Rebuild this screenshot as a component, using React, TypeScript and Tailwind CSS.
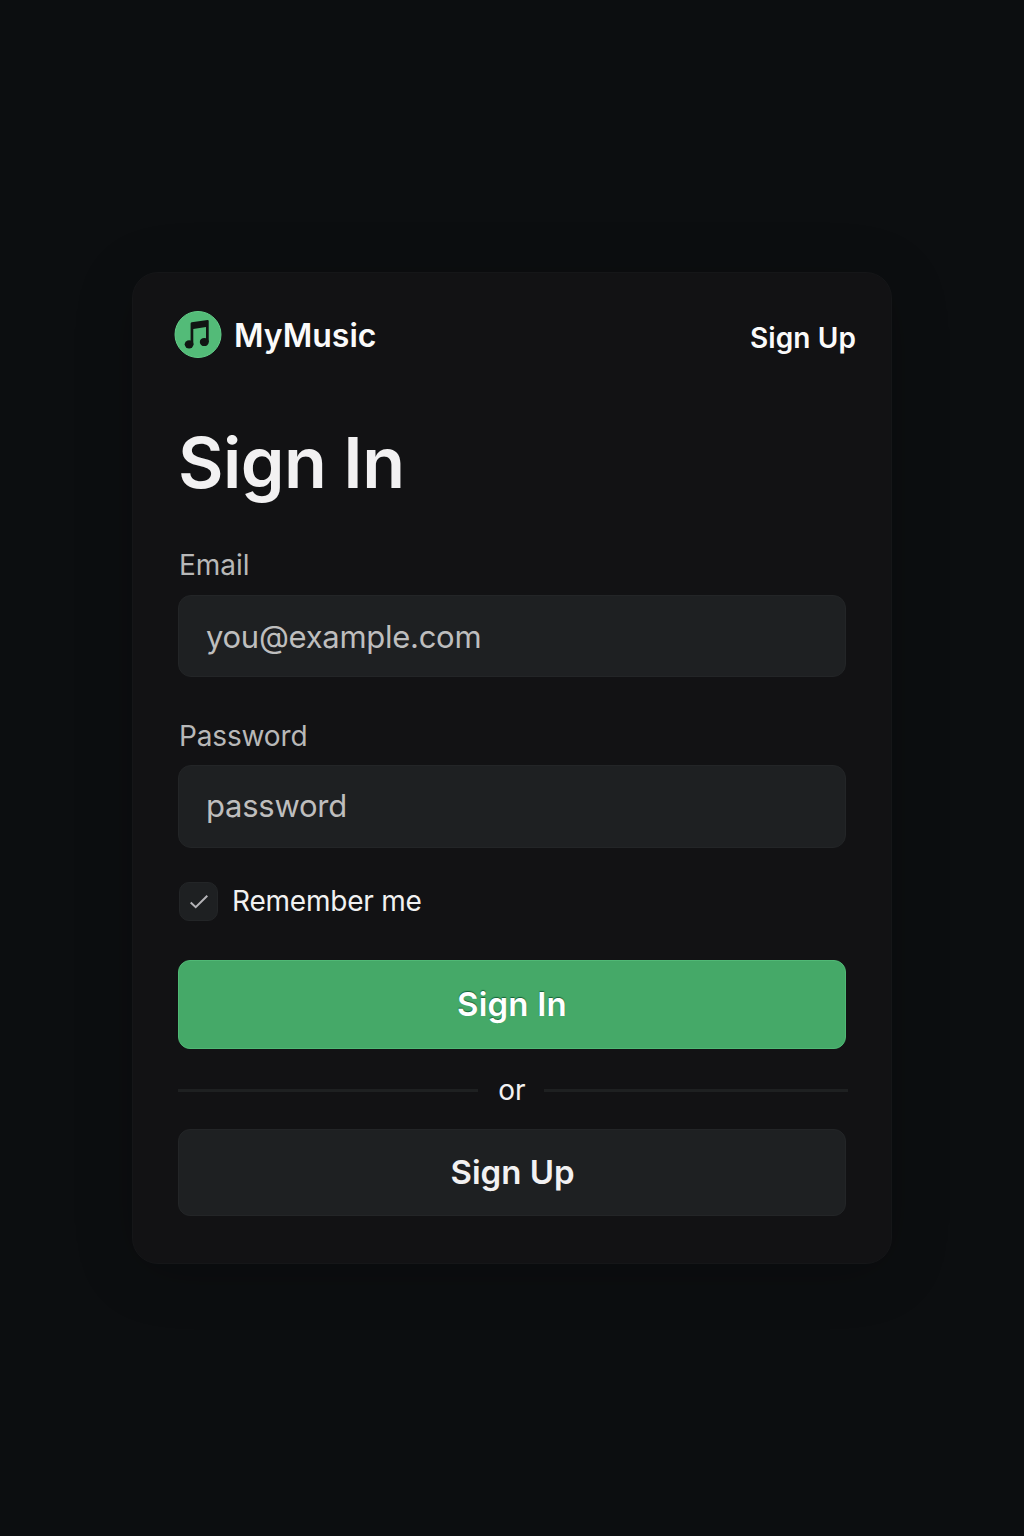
import React from "react";

const field = "flex w-[668px] items-center rounded-[13px] border border-[#232527] bg-[#1e2022] px-[26px] text-[#bebebe]";

function Label({ children, className = "" }: { children: React.ReactNode; className?: string }) {
  return <span className={`whitespace-nowrap ${className}`}>{children}</span>;
}

export default function App() {
  return (
    <div className="h-[1536px] w-[1024px] overflow-hidden bg-[#0c0e10] pt-[272px] font-['Inter',sans-serif]">
      <main className="ml-[132px] h-[992px] w-[760px] rounded-[26px] border border-[#151618] bg-[#121214] pl-[45px] shadow-[0_8px_60px_rgba(0,0,0,0.2)]">
        <header className="-ml-[4px] flex h-[124px] w-[682px] items-center justify-between text-[#fafafa]">
          <div className="flex items-center">
            <svg width="48" height="48" viewBox="0 0 48 48">
              <circle cx="24" cy="23.5" r="23" fill="#53bb78" stroke="#63ce89" />
              <g fill="#111513">
                <path d="M16.6 12.4Q16.7 11.5 17.6 11.3L33.6 8.9Q34.7 8.8 34.7 9.9V31H32V16L19.3 18V33.5H16.6Z" />
                <ellipse cx="15.1" cy="33.3" rx="4.4" ry="4.1" />
                <ellipse cx="30.3" cy="31" rx="4.5" ry="4.1" />
              </g>
            </svg>
            <Label className="ml-[12px] pt-[2px] text-[32px] font-semibold">MyMusic</Label>
          </div>
          <Label className="pt-[6px] text-[28px] font-semibold tracking-[0.1px]">Sign Up</Label>
        </header>
        <h1 className="mt-[21px] h-[100px] text-[70px] leading-[90px] font-semibold tracking-[-0.55px] text-[#f2f1f2]"><Label>Sign In</Label></h1>
        <div className="mt-[26px] h-[51px] pl-[1px] text-[28px] text-[#b8b8b8]"><Label>Email</Label></div>
        <div className={`${field} h-[82px]`}><Label className="pl-[1px] pt-[2px] text-[31px] tracking-[-0.28px]">you@example.com</Label></div>
        <div className="mt-[38px] h-[50px] pl-[1px] text-[28px] tracking-[-0.15px] text-[#b8b8b8]"><Label>Password</Label></div>
        <div className={`${field} h-[83px]`}><Label className="pl-[1px] text-[31px] tracking-[-0.25px]">password</Label></div>
        <div className="mt-[34px] flex h-[39px] items-center pl-[1px]">
          <div className="flex h-[39px] w-[39px] items-center justify-center rounded-[10px] border border-[#232527] bg-[#1e2022]">
            <svg width="20" height="16" viewBox="0 0 20 16" fill="none" stroke="#b5b4b8" strokeWidth="2">
              <path d="M1.7 8.6L6.7 13.2L18.3 1.8" />
            </svg>
          </div>
          <Label className="-mt-[2px] ml-[14px] text-[28px] tracking-[-0.22px] text-[#f1f1f1]">Remember me</Label>
        </div>
        <div className="mt-[39px] flex h-[89px] w-[668px] items-center justify-center rounded-[12px] border border-[#50b875] bg-[#45a968] text-white"><Label className="pt-[1px] text-[33px] font-semibold tracking-[0.2px] [text-shadow:0_-1px_1px_#17633a]">Sign In</Label></div>
        <div className="flex h-[80px] w-[670px] items-center text-[#f2f2f2]">
          <div className="mt-[3px] h-[3px] w-[300px] bg-[#1e2021]" />
          <Label className="w-[66px] pl-[2px] pt-[1px] text-center text-[28px] leading-[40px]">or</Label>
          <div className="mt-[3px] h-[3px] flex-1 bg-[#1e2021]" />
        </div>
        <div className="flex h-[87px] w-[668px] items-center justify-center rounded-[12px] border border-[#232527] bg-[#1e2022] text-[#f2f1f2]"><Label className="pl-[1px] pt-[1px] text-[33px] font-semibold">Sign Up</Label></div>
      </main>
    </div>
  );
}
